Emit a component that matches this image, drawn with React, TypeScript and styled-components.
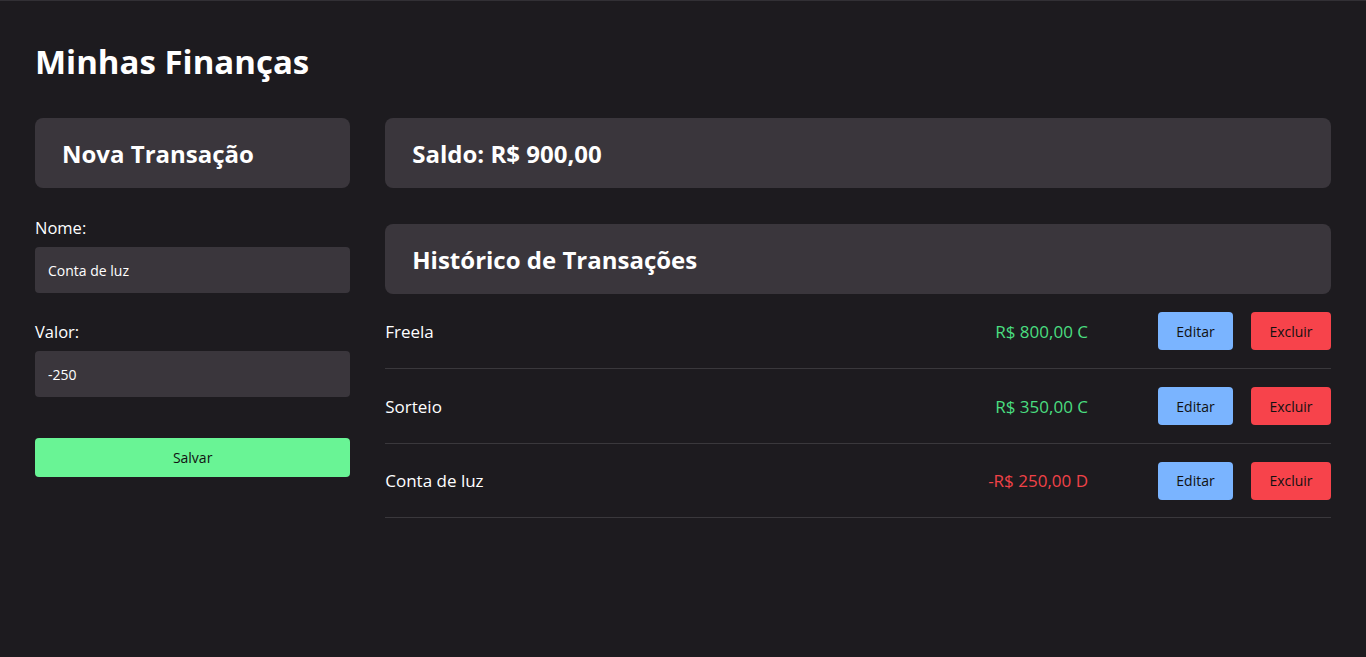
import React from 'react';
import styled, { createGlobalStyle } from 'styled-components';

const GlobalStyle = createGlobalStyle`
  * {
    box-sizing: border-box;
  }

  body {
    margin: 0;
    background: #1d1b1f;
    color: #ffffff;
    font-family: 'Open Sans', 'Noto Sans', sans-serif;
  }
`;

type Transaction = {
  id: number;
  name: string;
  amount: number;
};

const transactions: Transaction[] = [
  { id: 1, name: 'Freela', amount: 800 },
  { id: 2, name: 'Sorteio', amount: 350 },
  { id: 3, name: 'Conta de luz', amount: -250 },
];

const formatAmount = (value: number) => {
  const abs = Math.abs(value).toFixed(2).replace('.', ',');
  return value < 0 ? `-R$ ${abs} D` : `R$ ${abs} C`;
};

const Page = styled.main`
  min-height: 657px;
  border-top: 1px solid #323035;
  padding: 33px 35px 35px;
`;

const Title = styled.h1`
  margin: 0 0 28px;
  font-size: 33px;
  font-weight: 700;
  line-height: 56px;
`;

const Columns = styled.div`
  display: grid;
  grid-template-columns: 1fr 3fr;
  gap: 35px;
  align-items: start;
`;

const Card = styled.div`
  height: 70px;
  display: flex;
  align-items: center;
  padding: 0 27px;
  border-radius: 8px;
  background: #3a363c;
`;

const CardTitle = styled.h2`
  margin: 0;
  font-size: 24px;
  font-weight: 700;
`;

const Form = styled.form`
  display: flex;
  flex-direction: column;
`;

const Field = styled.label`
  display: flex;
  flex-direction: column;
  gap: 8px;
  margin-top: 28px;
  font-size: 16.5px;

  & + & {
    margin-top: 27px;
  }
`;

const Input = styled.input`
  height: 46px;
  padding: 0 13px;
  border: none;
  border-radius: 4px;
  background: #3a363c;
  color: #ffffff;
  font-family: inherit;
  font-size: 14px;
  outline: none;
`;

const SaveButton = styled.button`
  height: 39px;
  margin-top: 41px;
  border: none;
  border-radius: 4px;
  background: #69f495;
  color: #111;
  font-family: inherit;
  font-size: 14px;
`;

const RightColumn = styled.section`
  display: flex;
  flex-direction: column;
`;

const HistoryCard = styled(Card)`
  margin-top: 36px;
`;

const List = styled.ul`
  list-style: none;
  margin: 0;
  padding: 0;
`;

const Row = styled.li`
  display: flex;
  align-items: center;
  height: 75px;
  border-bottom: 1px solid #3a383c;
  font-size: 17px;

  &:last-child {
    height: 74px;
  }
`;

const Name = styled.span`
  flex: 1;
`;

const Amount = styled.span<{ $negative: boolean }>`
  color: ${(p) => (p.$negative ? '#f04248' : '#4ade80')};
  margin-right: 70px;
`;

const ActionButton = styled.button<{ $variant: 'edit' | 'delete' }>`
  height: 38px;
  width: ${(p) => (p.$variant === 'edit' ? '75px' : '80px')};
  margin-left: ${(p) => (p.$variant === 'delete' ? '18px' : '0')};
  border: none;
  border-radius: 4px;
  background: ${(p) => (p.$variant === 'edit' ? '#7ab4ff' : '#f7434b')};
  color: #111;
  font-family: inherit;
  font-size: 14px;
`;

export default function App() {
  return (
    <>
      <GlobalStyle />
      <Page>
        <Title>Minhas Finanças</Title>
        <Columns>
          <Form onSubmit={(e) => e.preventDefault()}>
            <Card>
              <CardTitle>Nova Transação</CardTitle>
            </Card>
            <Field>
              Nome:
              <Input defaultValue="Conta de luz" />
            </Field>
            <Field>
              Valor:
              <Input defaultValue="-250" />
            </Field>
            <SaveButton type="submit">Salvar</SaveButton>
          </Form>
          <RightColumn>
            <Card>
              <CardTitle>Saldo: R$ 900,00</CardTitle>
            </Card>
            <HistoryCard>
              <CardTitle>Histórico de Transações</CardTitle>
            </HistoryCard>
            <List>
              {transactions.map((t) => (
                <Row key={t.id}>
                  <Name>{t.name}</Name>
                  <Amount $negative={t.amount < 0}>{formatAmount(t.amount)}</Amount>
                  <ActionButton $variant="edit">Editar</ActionButton>
                  <ActionButton $variant="delete">Excluir</ActionButton>
                </Row>
              ))}
            </List>
          </RightColumn>
        </Columns>
      </Page>
    </>
  );
}
